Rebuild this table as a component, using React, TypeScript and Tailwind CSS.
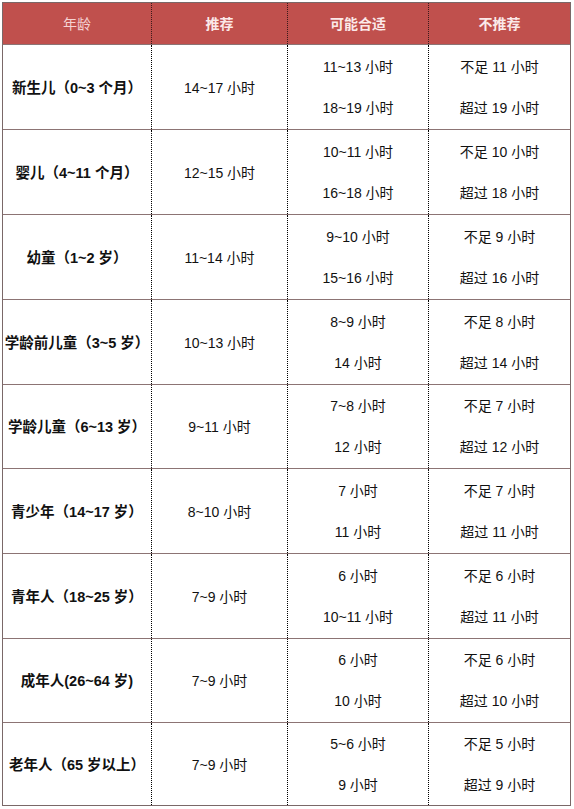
import React from "react";

const rows: { age: string; rec: string; may: [string, string]; not: [string, string]; h: string }[] = [
  { age: "新生儿（0~3 个月）", rec: "14~17 小时", may: ["11~13 小时", "18~19 小时"], not: ["不足 11 小时", "超过 19 小时"], h: "h-[85px]" },
  { age: "婴儿（4~11 个月）", rec: "12~15 小时", may: ["10~11 小时", "16~18 小时"], not: ["不足 10 小时", "超过 18 小时"], h: "h-[85px]" },
  { age: "幼童（1~2 岁）", rec: "11~14 小时", may: ["9~10 小时", "15~16 小时"], not: ["不足 9 小时", "超过 16 小时"], h: "h-[85px]" },
  { age: "学龄前儿童（3~5 岁）", rec: "10~13 小时", may: ["8~9 小时", "14 小时"], not: ["不足 8 小时", "超过 14 小时"], h: "h-[85px]" },
  { age: "学龄儿童（6~13 岁）", rec: "9~11 小时", may: ["7~8 小时", "12 小时"], not: ["不足 7 小时", "超过 12 小时"], h: "h-[84px]" },
  { age: "青少年（14~17 岁）", rec: "8~10 小时", may: ["7 小时", "11 小时"], not: ["不足 7 小时", "超过 11 小时"], h: "h-[85px]" },
  { age: "青年人（18~25 岁）", rec: "7~9 小时", may: ["6 小时", "10~11 小时"], not: ["不足 6 小时", "超过 11 小时"], h: "h-[85px]" },
  { age: "成年人(26~64 岁)", rec: "7~9 小时", may: ["6 小时", "10 小时"], not: ["不足 6 小时", "超过 10 小时"], h: "h-[84px]" },
  { age: "老年人（65 岁以上）", rec: "7~9 小时", may: ["5~6 小时", "9 小时"], not: ["不足 5 小时", "超过 9 小时"], h: "h-[83px]" },
];

const font = "font-['Liberation_Sans','Noto_Sans_CJK_SC',sans-serif]";

function Two({ a, b }: { a: string; b: string }) {
  return (
    <div className="flex flex-col items-center gap-[21px]">
      <div className="leading-[20px]">{a}</div>
      <div className="leading-[20px]">{b}</div>
    </div>
  );
}

export default function App() {
  return (
    <div className={`bg-white w-[574px] h-[809px] pt-[2px] pl-[2px] ${font} text-[14px] text-[#111111]`}>
      <div className="w-[569px] border border-[#7a6868] flex flex-col">
        <div className="flex h-[41px] bg-[#c0504d] text-[#fbe9e9]">
          <div className="w-[148px] flex items-center justify-center pt-[1px] text-[#f5d3d3]">年龄</div>
          <div className="w-[136px] flex items-center justify-center pt-[1px] border-l border-dotted border-[#3a1a1a] font-bold">推荐</div>
          <div className="w-[141px] flex items-center justify-center pt-[1px] border-l border-dotted border-[#3a1a1a] font-bold">可能合适</div>
          <div className="flex-1 flex items-center justify-center pt-[1px] border-l border-dotted border-[#3a1a1a] font-bold">不推荐</div>
        </div>
        {rows.map((r, i) => (
          <div key={i} className={`flex ${r.h} border-t border-[#8c7474]`}>
            <div className="w-[148px] flex items-center justify-center pt-[3px] font-bold whitespace-nowrap text-[14.5px]">{r.age}</div>
            <div className="w-[136px] flex items-center justify-center pt-[2px] border-l border-dotted border-black">{r.rec}</div>
            <div className="w-[141px] flex items-center justify-center border-l border-dotted border-black">
              <Two a={r.may[0]} b={r.may[1]} />
            </div>
            <div className="flex-1 flex items-center justify-center border-l border-dotted border-black">
              <Two a={r.not[0]} b={r.not[1]} />
            </div>
          </div>
        ))}
      </div>
    </div>
  );
}
